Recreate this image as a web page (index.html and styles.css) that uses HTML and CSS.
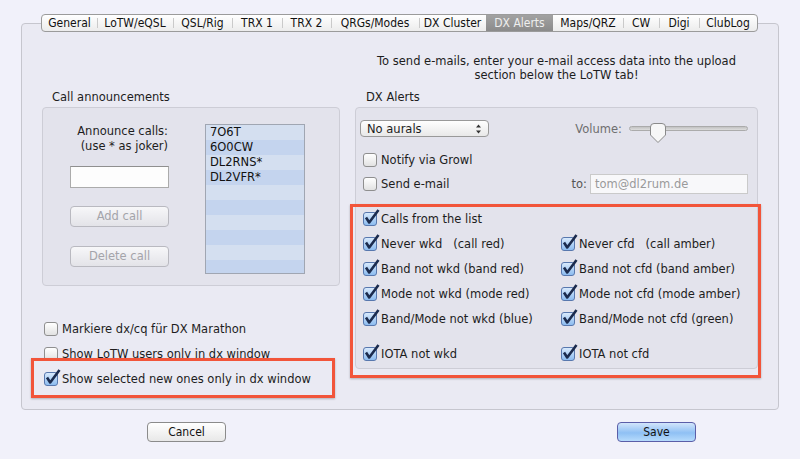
FILE: index.html
```html
<!DOCTYPE html>
<html>
<head>
    <meta charset="utf-8">
    <title>Preferences - DX Alerts</title>
    <link rel="stylesheet" href="styles.css">
</head>
<body>
<div class="prefs">
    <div class="tabs">
        <div class="tab">General</div>
        <div class="tab">LoTW/eQSL</div>
        <div class="tab">QSL/Rig</div>
        <div class="tab">TRX 1</div>
        <div class="tab">TRX 2</div>
        <div class="tab">QRGs/Modes</div>
        <div class="tab">DX Cluster</div>
        <div class="tab active">DX Alerts</div>
        <div class="tab">Maps/QRZ</div>
        <div class="tab">CW</div>
        <div class="tab">Digi</div>
        <div class="tab">ClubLog</div>
    </div>

    <div class="frame">
        <div class="note">To send e-mails, enter your e-mail access data into the upload<br>section below the LoTW tab!</div>

        <div class="col-left">
            <div class="group-title">Call announcements</div>
            <div class="group calls">
                <div class="call-form">
                    <div class="hint">Announce calls:<br>(use * as joker)</div>
                    <div class="field"></div>
                    <div class="btn add">Add call</div>
                    <div class="btn del">Delete call</div>
                </div>
                <div class="call-list">
                    <div>7O6T</div>
                    <div>6O0CW</div>
                    <div>DL2RNS*</div>
                    <div>DL2VFR*</div>
                </div>
            </div>
            <div class="extra">
                <div class="check"><span class="cb"></span>Markiere dx/cq für DX Marathon</div>
                <div class="check"><span class="cb"></span>Show LoTW users only in dx window</div>
                <div class="check"><span class="cb on"><svg viewBox="0 0 18 18"><path d="M3 9.5 L6.2 14.5 L15.5 2"/></svg></span>Show selected new ones only in dx window</div>
            </div>
        </div>

        <div class="col-right">
            <div class="group-title">DX Alerts</div>
            <div class="group alerts">
                <div class="top">
                    <div class="popup">No aurals
                        <svg class="updown" viewBox="0 0 7 10"><path d="M3.5 0.5 L6 3.5 H1 Z M3.5 9.5 L6 6.5 H1 Z"/></svg>
                    </div>
                    <div class="volume">Volume:
                        <div class="slider">
                            <svg class="thumb" viewBox="0 0 18 20"><path d="M1.5 4 Q1.5 0.5 5 0.5 H13 Q16.5 0.5 16.5 4 V12 L9 19.5 L1.5 12 Z"/></svg>
                        </div>
                    </div>
                </div>
                <div class="opts">
                    <div class="check row"><span class="cb"></span>Notify via Growl</div>
                    <div class="check row"><span class="cb"></span>Send e-mail
                        <div class="to">to: <div class="email">tom@dl2rum.de</div></div>
                    </div>
                </div>
                <div class="alert-grid">
                    <div class="check wide"><span class="cb on"><svg viewBox="0 0 18 18"><path d="M3 9.5 L6.2 14.5 L15.5 2"/></svg></span>Calls from the list</div>
                    <div class="check"><span class="cb on"><svg viewBox="0 0 18 18"><path d="M3 9.5 L6.2 14.5 L15.5 2"/></svg></span>Never wkd&nbsp;&nbsp;&nbsp;(call red)</div>
                    <div class="check"><span class="cb on"><svg viewBox="0 0 18 18"><path d="M3 9.5 L6.2 14.5 L15.5 2"/></svg></span>Never cfd&nbsp;&nbsp;&nbsp;(call amber)</div>
                    <div class="check"><span class="cb on"><svg viewBox="0 0 18 18"><path d="M3 9.5 L6.2 14.5 L15.5 2"/></svg></span>Band not wkd (band red)</div>
                    <div class="check"><span class="cb on"><svg viewBox="0 0 18 18"><path d="M3 9.5 L6.2 14.5 L15.5 2"/></svg></span>Band not cfd (band amber)</div>
                    <div class="check"><span class="cb on"><svg viewBox="0 0 18 18"><path d="M3 9.5 L6.2 14.5 L15.5 2"/></svg></span>Mode not wkd (mode red)</div>
                    <div class="check"><span class="cb on"><svg viewBox="0 0 18 18"><path d="M3 9.5 L6.2 14.5 L15.5 2"/></svg></span>Mode not cfd (mode amber)</div>
                    <div class="check"><span class="cb on"><svg viewBox="0 0 18 18"><path d="M3 9.5 L6.2 14.5 L15.5 2"/></svg></span>Band/Mode not wkd (blue)</div>
                    <div class="check"><span class="cb on"><svg viewBox="0 0 18 18"><path d="M3 9.5 L6.2 14.5 L15.5 2"/></svg></span>Band/Mode not cfd (green)</div>
                    <div class="check iota"><span class="cb on"><svg viewBox="0 0 18 18"><path d="M3 9.5 L6.2 14.5 L15.5 2"/></svg></span>IOTA not wkd</div>
                    <div class="check iota"><span class="cb on"><svg viewBox="0 0 18 18"><path d="M3 9.5 L6.2 14.5 L15.5 2"/></svg></span>IOTA not cfd</div>
                </div>
            </div>
        </div>

        <div class="mark mark-left"></div>
        <div class="mark mark-right"></div>
    </div>

    <div class="buttons">
        <div class="push">Cancel</div>
        <div class="push default">Save</div>
    </div>
</div>
</body>
</html>
```

FILE: styles.css
```css
* {
    box-sizing: border-box;
}
body {
    margin: 0;
    background: #f1f1fa;
    font-family: "DejaVu Sans", sans-serif;
    font-size: 11.5px;
    color: #1d1d1d;
}
.prefs {
    width: 800px;
    height: 459px;
    overflow: hidden;
}

/* tab bar */
.tabs {
    position: relative;
    z-index: 1;
    display: grid;
    grid-template-columns: 55px 76px 59px 50px 49px 88px 67px 67px 70px 36px 40px 58px;
    width: max-content;
    height: 18px;
    margin: 14px 0 0 41px;
    border: 1px solid #9b9b9b;
    border-radius: 4px;
    background: linear-gradient(#ffffff, #ececec);
    overflow: hidden;
    font-family: "Liberation Sans Narrow", "DejaVu Sans Condensed", "Liberation Sans", sans-serif;
    font-size: 12px;
    color: #111;
}
.tab {
    position: relative;
    text-align: center;
    line-height: 16px;
    white-space: nowrap;
}
.tab + .tab::before {
    content: "";
    position: absolute;
    left: 0;
    top: 3px;
    bottom: 3px;
    width: 1px;
    background: #cacaca;
}
.tab.active {
    background: linear-gradient(#a2a2a2, #8b8b8b);
    color: #eeeeee;
}
.tab.active::before,
.tab.active + .tab::before {
    display: none;
}

/* main frame */
.frame {
    position: relative;
    display: grid;
    grid-template-columns: 298px 403px;
    column-gap: 15px;
    align-content: start;
    height: 387px;
    margin: -9px 21px 0;
    padding: 30px 20px 0;
    border: 1px solid #c6c6ce;
    border-radius: 4px;
    background: #eaeaf3;
}
.note {
    grid-column: 2;
    text-align: center;
    line-height: 14px;
}
.group-title {
    margin: 8px 0 2px 10px;
    line-height: 15px;
}
.col-right .group-title {
    margin-left: 11px;
}
.group {
    border: 1px solid #cdcdd6;
    border-radius: 4px;
    background: #e3e3ec;
}

/* call announcements */
.calls {
    display: flex;
    gap: 36px;
    padding: 16px 0 11px 27px;
}
.call-form {
    width: 99px;
    display: flex;
    flex-direction: column;
}
.hint {
    text-align: right;
    line-height: 15px;
    padding-right: 1px;
}
.field {
    height: 22px;
    margin-top: 12px;
    border: 1px solid #ababab;
    border-top-color: #8f8f8f;
    background: #fdfdfd;
}
.btn {
    height: 21px;
    border: 1px solid #b9b9c0;
    border-radius: 4px;
    background: linear-gradient(#f7f7f9, #e3e3e8);
    color: #a4a4aa;
    text-align: center;
    line-height: 19px;
}
.btn.add {
    margin-top: 18px;
}
.btn.del {
    margin-top: 19px;
}
.call-list {
    width: 100px;
    height: 150px;
    border: 1px solid #a0a6b2;
    background: repeating-linear-gradient(#d4dff0 0 15px, #c4d4ee 15px 30px);
    line-height: 15px;
    padding-left: 4px;
    color: #111;
}

/* checkboxes */
.check {
    display: flex;
    align-items: center;
    gap: 4px;
    height: 25px;
    white-space: nowrap;
}
.cb {
    position: relative;
    flex: none;
    width: 14px;
    height: 14px;
    border: 1px solid #8f8f8f;
    border-radius: 3px;
    background: linear-gradient(#ffffff, #e2e2e2);
}
.cb.on {
    border-color: #5878ae;
    background: linear-gradient(#d8e9fc, #8cbcf0);
}
.cb svg {
    position: absolute;
    left: -1px;
    top: -5px;
    width: 18px;
    height: 18px;
}
.cb path {
    fill: none;
    stroke: #1b2b4e;
    stroke-width: 2.6;
    stroke-linejoin: round;
}
.extra {
    margin-top: 30px;
    padding-left: 2px;
}

/* dx alerts */
.alerts {
    padding: 12px 9px 2px 4px;
}
.top {
    display: flex;
    justify-content: space-between;
    align-items: center;
    height: 17px;
}
.popup {
    display: flex;
    align-items: center;
    justify-content: space-between;
    width: 129px;
    height: 17px;
    padding: 0 6px;
    border: 1px solid #999;
    border-radius: 4px;
    background: linear-gradient(#ffffff, #e8e8e8);
}
.updown {
    width: 7px;
    height: 10px;
    fill: #333;
}
.volume {
    display: flex;
    align-items: center;
    gap: 7px;
    color: #6e6e6e;
}
.slider {
    position: relative;
    width: 119px;
    height: 5px;
    border: 1px solid #ababab;
    border-radius: 3px;
    background: linear-gradient(#c2c2c2, #dddddd);
}
.thumb {
    position: absolute;
    left: 19px;
    top: -4px;
    width: 18px;
    height: 20px;
}
.thumb path {
    fill: #f7f7f7;
    stroke: #8a8a8a;
    stroke-width: 1;
}
.opts {
    margin: 11px 0 0 3px;
}
.check.row {
    height: 24px;
}
.to {
    display: flex;
    align-items: center;
    gap: 3px;
    margin-left: auto;
    color: #555;
}
.email {
    width: 158px;
    height: 20px;
    padding-left: 4px;
    border: 1px solid #cacaca;
    background: #f8f8fa;
    color: #9a9a9a;
    line-height: 18px;
}
.alert-grid {
    display: grid;
    grid-template-columns: 198px 1fr;
    margin: 10px 0 0 3px;
}
.check.wide {
    grid-column: 1 / -1;
}
.check.iota {
    margin-top: 10px;
}

/* red highlight boxes */
.mark {
    position: absolute;
    border: 3px solid #f2553a;
    box-shadow: 0 1px 2px rgba(0,0,0,0.25);
}
.mark-left {
    left: 9px;
    top: 334px;
    width: 304px;
    height: 40px;
}
.mark-right {
    left: 328px;
    top: 180px;
    width: 411px;
    height: 174px;
}

/* bottom buttons */
.buttons {
    display: flex;
    justify-content: space-between;
    padding: 12px 104px 0 147px;
}
.push {
    width: 79px;
    height: 20px;
    border: 1px solid #8b8b8b;
    border-radius: 4px;
    background: linear-gradient(#ffffff, #e8e8e8);
    text-align: center;
    line-height: 18px;
    font-family: "Liberation Sans Narrow", "DejaVu Sans Condensed", "Liberation Sans", sans-serif;
    font-size: 12px;
    color: #111;
}
.push.default {
    border-color: #5b5ea8;
    background: linear-gradient(#d2e5fb, #8fc0f4 55%, #b6dbfc);
}
```
